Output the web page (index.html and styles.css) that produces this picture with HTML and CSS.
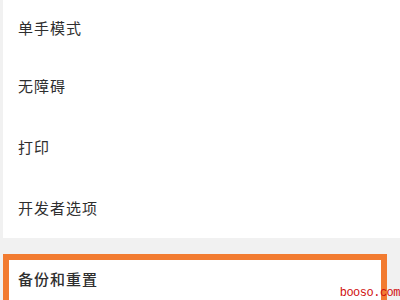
FILE: index.html
```html
<!DOCTYPE html>
<html lang="zh">
<head>
<meta charset="utf-8">
<link rel="stylesheet" href="styles.css">
</head>
<body>
<div class="card">
  <div class="row first">单手模式</div>
  <div class="row">无障碍</div>
  <div class="row">打印</div>
  <div class="row last">开发者选项</div>
</div>
<div class="highlight">
  <div class="hrow">备份和重置</div>
</div>
<div class="watermark">booso.com</div>
</body>
</html>
```
FILE: styles.css
```css
html, body {
  margin: 0;
  padding: 0;
  width: 400px;
  height: 300px;
  overflow: hidden;
  background: #f1f1f1;
  font-family: "Noto Sans CJK SC", "Noto Sans", sans-serif;
  color: #2e2e2e;
}
body {
  position: relative;
}
.card {
  background: #fff;
  margin-left: 3px;
  height: 238px;
  display: flex;
  flex-direction: column;
}
.row {
  height: 61px;
  flex: none;
  display: flex;
  align-items: center;
  padding-left: 15px;
  font-size: 15px;
  letter-spacing: 1px;
}
.row.first {
  height: 55px;
}
.row.last {
  height: 61px;
}
.highlight {
  margin-top: 16px;
  margin-left: 3px;
  width: 372px;
  height: 40px;
  border: 6px solid #f27b30;
  border-bottom: none;
  background: #fff;
}
.hrow {
  height: 36px;
  display: flex;
  align-items: center;
  padding-left: 9px;
  font-size: 15px;
  font-weight: 500;
  letter-spacing: 1px;
}
.watermark {
  position: absolute;
  right: 0;
  bottom: 0;
  font-family: "Liberation Mono", monospace;
  font-size: 12px;
  line-height: 13px;
  color: #d01010;
  letter-spacing: -0.5px;
}
```
